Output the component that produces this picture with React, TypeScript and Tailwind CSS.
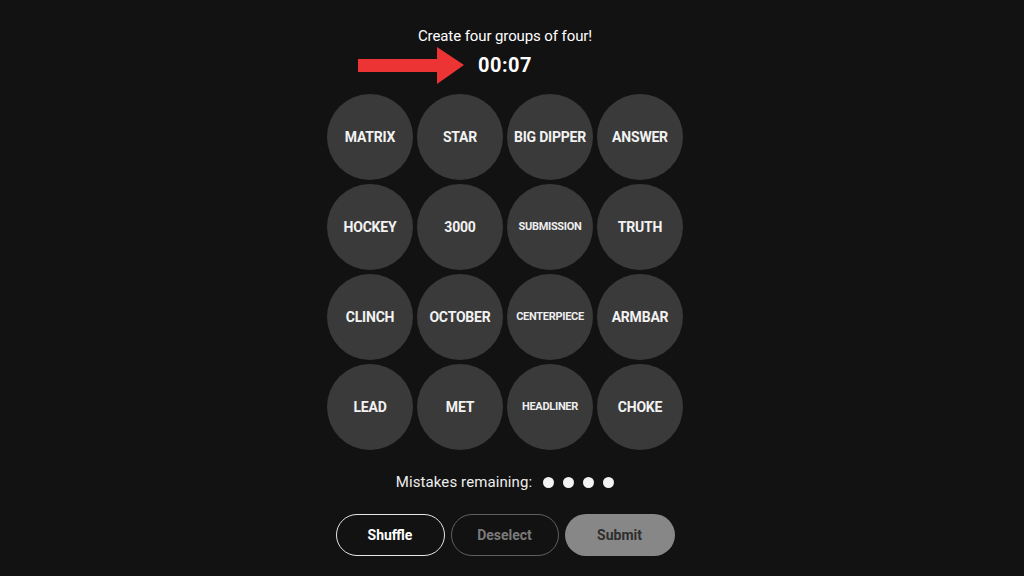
const words = [
  {label: 'MATRIX', small: false},
  {label: 'STAR', small: false},
  {label: 'BIG DIPPER', small: false},
  {label: 'ANSWER', small: false},
  {label: 'HOCKEY', small: false},
  {label: '3000', small: false},
  {label: 'SUBMISSION', small: true},
  {label: 'TRUTH', small: false},
  {label: 'CLINCH', small: false},
  {label: 'OCTOBER', small: false},
  {label: 'CENTERPIECE', small: true},
  {label: 'ARMBAR', small: false},
  {label: 'LEAD', small: false},
  {label: 'MET', small: false},
  {label: 'HEADLINER', small: true},
  {label: 'CHOKE', small: false}
];

function Arrow() {
  return (
    <svg
      className="absolute left-[-122px] top-[-8px]"
      width="110"
      height="40"
      viewBox="0 0 110 40"
    >
      <path d="M2 13 H81 V1 L108 19 L81 38 V26 H2 Z" fill="#ec3434" />
    </svg>
  );
}

export default function App() {
  return (
    <div
      className="flex h-[576px] w-full flex-col items-center bg-[#121212] pr-[14px] text-white"
      style={{fontFamily: 'Roboto, "Liberation Sans", sans-serif'}}
    >
      <p className="mt-[26px] text-[15px] leading-5 tracking-[-0.1px]">Create four groups of four!</p>
      <div className="relative mt-[8px] flex h-[22px] items-center">
        <Arrow />
        <span className="text-[20px] font-bold leading-none tracking-[0.5px]">00:07</span>
      </div>
      <div className="mt-[18px] grid grid-cols-[repeat(4,86px)] gap-[4px]">
        {words.map((word) => (
          <div
            key={word.label}
            className="flex h-[86px] w-[86px] items-center justify-center rounded-full bg-[#3a3a3a]"
          >
            <span
              className={
                word.small
                  ? 'text-[11px] font-bold tracking-[-0.3px] text-[#eeeeee]'
                  : 'text-[14px] font-bold tracking-[-0.2px] text-[#f2f2f2]'
              }
            >
              {word.label}
            </span>
          </div>
        ))}
      </div>
      <div className="mt-[22px] flex h-5 items-center">
        <span className="text-[15px] tracking-[0.1px] text-[#eeeeee]">Mistakes remaining:</span>
        <div className="ml-[11px] flex gap-[9px]">
          {[0, 1, 2, 3].map((i) => (
            <span key={i} className="h-[11px] w-[11px] rounded-full bg-[#f2f2f2]" />
          ))}
        </div>
      </div>
      <div className="mt-[22px] flex gap-[6px]">
        <button
          type="button"
          className="h-[42px] w-[109px] rounded-full border border-[#e6e6e6] text-[14px] font-bold text-white"
        >
          Shuffle
        </button>
        <button
          type="button"
          className="h-[42px] w-[108px] rounded-full border border-[#5f5f5f] text-[14px] font-bold text-[#7a7a7a]"
        >
          Deselect
        </button>
        <button
          type="button"
          className="h-[42px] w-[110px] rounded-full bg-[#878787] text-[14px] font-bold text-[#2e2e2e]"
        >
          Submit
        </button>
      </div>
    </div>
  );
}
